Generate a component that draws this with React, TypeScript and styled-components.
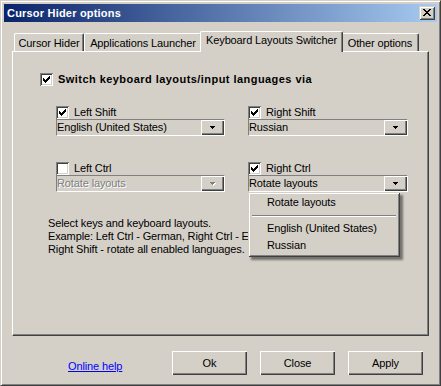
import React from 'react';
import styled, { createGlobalStyle } from 'styled-components';

const GlobalStyle = createGlobalStyle`
  html, body { margin: 0; padding: 0; background: #d4d0c8; }
  body { font-family: "Liberation Sans", Arial, sans-serif; font-size: 11px; color: #000; letter-spacing: -0.12px; }
  * { box-sizing: border-box; }
`;

const Window = styled.div`
  width: 441px;
  height: 386px;
  background: #d4d0c8;
  border: 1px solid;
  border-color: #d4d0c8 #404040 #404040 #d4d0c8;
  box-shadow: inset 1px 1px #fff, inset -1px -1px #808080;
  padding: 3px;
  display: flex;
  flex-direction: column;
`;

const TitleBar = styled.div`
  height: 18px;
  flex: none;
  display: flex;
  align-items: center;
  justify-content: space-between;
  padding: 0 2px 0 3px;
  background: linear-gradient(to right, #0a246a, #a6caf0);
`;

const Title = styled.span`
  color: #fff;
  font-weight: bold;
  font-size: 11px;
  line-height: 13px;
  letter-spacing: 0.2px;
`;

const CaptionButton = styled.div`
  width: 16px;
  height: 14px;
  background: #d4d0c8;
  display: flex;
  align-items: center;
  justify-content: center;
  padding: 0 1px 1px 0;
  box-shadow: inset 1px 1px #d4d0c8, inset -1px -1px #404040, inset 2px 2px #fff,
    inset -2px -2px #808080;
`;

const TabStrip = styled.div`
  display: flex;
  align-items: flex-end;
  height: 21px;
  margin: 9px 0 -1px 10px;
  position: relative;
  z-index: 1;
`;

const Tab = styled.div<{ $w: number; $active?: boolean }>`
  width: ${(p) => p.$w}px;
  height: ${(p) => (p.$active ? 21 : 18)}px;
  margin: ${(p) => (p.$active ? '0 -2px 0 -2px' : '0 0 1px 0')};
  position: relative;
  z-index: ${(p) => (p.$active ? 2 : 1)};
  background: #d4d0c8;
  border-top: 1px solid #fff;
  border-left: 1px solid #fff;
  border-right: 1px solid #404040;
  border-radius: 2px 2px 0 0;
  box-shadow: inset -1px 0 #808080;
  text-align: center;
  padding-top: ${(p) => (p.$active ? 2 : 3)}px;
  line-height: 13px;
  white-space: nowrap;
`;

const Panel = styled.div`
  height: 285px;
  margin: 0 8px 0 8px;
  border: 1px solid;
  border-color: #fff #404040 #404040 #fff;
  box-shadow: inset -1px -1px #808080;
  padding: 21px 0 0 27px;
  display: flex;
  flex-direction: column;
`;

const CheckRow = styled.label`
  display: flex;
  align-items: center;
  gap: 5px;
  height: 13px;
  line-height: 13px;
  white-space: nowrap;
`;

const BoldText = styled.span`
  font-weight: bold;
  letter-spacing: 0.45px;
`;

const CheckBox = styled.span`
  width: 13px;
  height: 13px;
  flex: none;
  background: #fff;
  display: flex;
  align-items: center;
  justify-content: center;
  box-shadow: inset 1px 1px #808080, inset -1px -1px #fff, inset 2px 2px #404040,
    inset -2px -2px #d4d0c8;
`;

const KeyGrid = styled.div`
  display: grid;
  grid-template-columns: 169px 160px;
  column-gap: 23px;
  row-gap: 26px;
  margin: 20px 0 0 16px;
`;

const Group = styled.div<{ $raised?: boolean }>`
  display: flex;
  flex-direction: column;
  position: relative;
  z-index: ${(p) => (p.$raised ? 5 : 1)};
`;

const Combo = styled.div`
  height: 17px;
  display: flex;
  border: 1px solid;
  border-color: #808080 #fff #fff #808080;
  background: #d4d0c8;
`;

const ComboText = styled.span<{ $disabled?: boolean }>`
  flex: 1;
  line-height: 15px;
  white-space: nowrap;
  overflow: hidden;
  color: ${(p) => (p.$disabled ? '#808080' : '#000')};
  text-shadow: ${(p) => (p.$disabled ? '1px 1px #fff' : 'none')};
`;

const ComboButton = styled.span`
  width: 23px;
  flex: none;
  display: flex;
  align-items: center;
  justify-content: center;
  padding-top: 1px;
  box-shadow: inset 1px 1px #fff, inset -1px -1px #404040, inset -2px -2px #808080;
`;

const Note = styled.div`
  margin: 25px 0 0 8px;
  line-height: 13px;
  white-space: nowrap;
`;

const Popup = styled.div`
  position: absolute;
  top: 100%;
  left: 0;
  width: 152px;
  height: 65px;
  background: #d4d0c8;
  padding: 2px;
  box-shadow: inset 1px 1px #d4d0c8, inset -1px -1px #404040, inset 2px 2px #fff,
    inset -2px -2px #808080, 3px 3px 2px rgba(0, 0, 0, 0.45);
`;

const PopupItem = styled.div`
  height: 17px;
  line-height: 17px;
  padding-left: 17px;
  white-space: nowrap;
`;

const PopupSeparator = styled.div`
  height: 2px;
  margin: 4px 2px 3px 2px;
  border-top: 1px solid #808080;
  border-bottom: 1px solid #fff;
`;

const Footer = styled.div`
  display: flex;
  align-items: center;
  margin-top: 15px;
  padding: 0 14px 0 64px;
`;

const HelpLink = styled.a`
  color: #0000ff;
  text-decoration: underline;
  margin-top: 6px;
  line-height: 13px;
  cursor: pointer;
`;

const ButtonGroup = styled.div`
  display: flex;
  gap: 13px;
  margin-left: auto;
`;

const PushButton = styled.button`
  width: 75px;
  height: 24px;
  font: inherit;
  letter-spacing: inherit;
  color: #000;
  background: #d4d0c8;
  border: none;
  padding: 0 0 1px 0;
  box-shadow: inset 1px 1px #fff, inset -1px -1px #404040, inset -2px -2px #808080;
`;

const CheckMark = () => (
  <svg width="7" height="7" viewBox="0 0 7 7" shapeRendering="crispEdges">
    <path
      d="M6 0h1v1H6z M5 1h2v1H5z M0 2h1v1H0z M4 2h3v1H4z M0 3h2v1H0z M3 3h3v1H3z M0 4h5v1H0z M1 5h3v1H1z M2 6h1v1H2z"
      fill="#000"
    />
  </svg>
);

const CloseGlyph = () => (
  <svg width="8" height="7" viewBox="0 0 8 7" shapeRendering="crispEdges">
    <path
      d="M0 0h2v1H0z M6 0h2v1H6z M1 1h2v1H1z M5 1h2v1H5z M2 2h4v1H2z M3 3h2v1H3z M2 4h4v1H2z M1 5h2v1H1z M5 5h2v1H5z M0 6h2v1H0z M6 6h2v1H6z"
      fill="#000"
    />
  </svg>
);

const Arrow = ({ disabled }: { disabled?: boolean }) => (
  <svg width="6" height="4" viewBox="0 0 6 4" shapeRendering="crispEdges">
    {disabled && <path d="M1 1h5v1H1z M2 2h3v1H2z M3 3h1v1H3z" fill="#fff" />}
    <path d="M0 0h5v1H0z M1 1h3v1H1z M2 2h1v1H2z" fill={disabled ? '#808080' : '#000'} />
  </svg>
);

type KeyProps = {
  label: string;
  checked: boolean;
  value: string;
  disabled?: boolean;
  open?: boolean;
};

const KeyGroup = ({ label, checked, value, disabled, open }: KeyProps) => (
  <Group $raised={open}>
    <CheckRow>
      <CheckBox>{checked && <CheckMark />}</CheckBox>
      {label}
    </CheckRow>
    <Combo>
      <ComboText $disabled={disabled}>{value}</ComboText>
      <ComboButton>
        <Arrow disabled={disabled} />
      </ComboButton>
    </Combo>
    {open && (
      <Popup>
        <PopupItem>Rotate layouts</PopupItem>
        <PopupSeparator />
        <PopupItem>English (United States)</PopupItem>
        <PopupItem>Russian</PopupItem>
      </Popup>
    )}
  </Group>
);

export default function App() {
  return (
    <>
      <GlobalStyle />
      <Window>
        <TitleBar>
          <Title>Cursor Hider options</Title>
          <CaptionButton>
            <CloseGlyph />
          </CaptionButton>
        </TitleBar>
        <TabStrip>
          <Tab $w={70}>Cursor Hider</Tab>
          <Tab $w={118}>Applications Launcher</Tab>
          <Tab $w={143} $active>
            Keyboard Layouts Switcher
          </Tab>
          <Tab $w={78}>Other options</Tab>
        </TabStrip>
        <Panel>
          <CheckRow>
            <CheckBox>
              <CheckMark />
            </CheckBox>
            <BoldText>Switch keyboard layouts/input languages via</BoldText>
          </CheckRow>
          <KeyGrid>
            <KeyGroup label="Left Shift" checked value="English (United States)" />
            <KeyGroup label="Right Shift" checked value="Russian" />
            <KeyGroup label="Left Ctrl" checked={false} value="Rotate layouts" disabled />
            <KeyGroup label="Right Ctrl" checked value="Rotate layouts" open />
          </KeyGrid>
          <Note>
            Select keys and keyboard layouts.
            <br />
            Example: Left Ctrl - German, Right Ctrl - English,
            <br />
            Right Shift - rotate all enabled languages.
          </Note>
        </Panel>
        <Footer>
          <HelpLink>Online help</HelpLink>
          <ButtonGroup>
            <PushButton>Ok</PushButton>
            <PushButton>Close</PushButton>
            <PushButton>Apply</PushButton>
          </ButtonGroup>
        </Footer>
      </Window>
    </>
  );
}
